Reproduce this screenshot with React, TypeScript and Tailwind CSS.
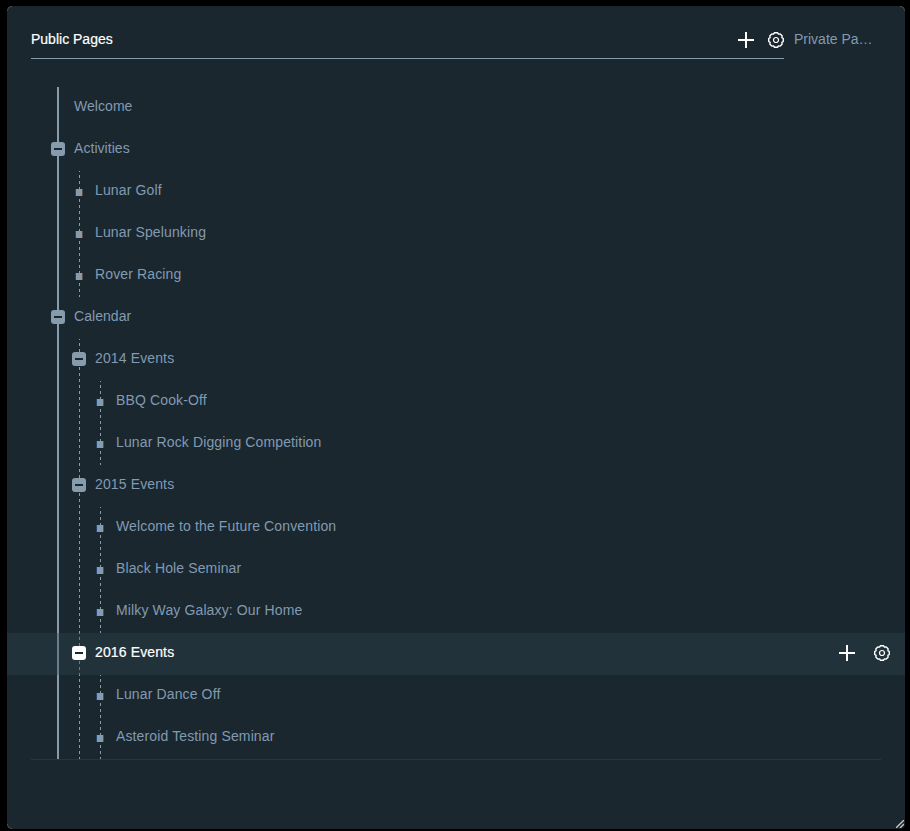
type Page = { title: string; children?: Page[]; active?: boolean };

const pages: Page[] = [
  { title: "Welcome" },
  {
    title: "Activities",
    children: [{ title: "Lunar Golf" }, { title: "Lunar Spelunking" }, { title: "Rover Racing" }],
  },
  {
    title: "Calendar",
    children: [
      { title: "2014 Events", children: [{ title: "BBQ Cook-Off" }, { title: "Lunar Rock Digging Competition" }] },
      {
        title: "2015 Events",
        children: [
          { title: "Welcome to the Future Convention" },
          { title: "Black Hole Seminar" },
          { title: "Milky Way Galaxy: Our Home" },
        ],
      },
      {
        title: "2016 Events",
        active: true,
        children: [{ title: "Lunar Dance Off" }, { title: "Asteroid Testing Seminar" }],
      },
    ],
  },
];

function Plus() {
  return (
    <svg width="16" height="16" viewBox="0 0 16 16" className="shrink-0" stroke="#fff" strokeWidth="2">
      <path d="M8 0v16M0 8h16" />
    </svg>
  );
}

function Gear() {
  return (
    <svg width="16" height="16" viewBox="-8 -8 16 16" className="shrink-0" fill="none" stroke="#fff" strokeWidth="1.4" strokeLinejoin="round">
      <path d="M-1.5-7.3H1.5L2.4-5.9L4.2-6.1L6.1-4.2L5.9-2.4L7.3-1.5V1.5L5.9 2.4L6.1 4.2L4.2 6.1L2.4 5.9L1.5 7.3H-1.5L-2.4 5.9L-4.2 6.1L-6.1 4.2L-5.9 2.4L-7.3 1.5V-1.5L-5.9-2.4L-6.1-4.2L-4.2-6.1L-2.4-5.9Z" />
      <circle r="2.5" strokeWidth="1.2" />
    </svg>
  );
}

function Guide({ level }: { level: number }) {
  if (level === 0) return <span className="absolute inset-y-0 left-[6px] w-[2px] bg-[#869cad]" />;
  return (
    <span className="absolute inset-y-0 left-[7px] w-px bg-[repeating-linear-gradient(to_bottom,#869cad_0_1px,transparent_1px_4px,#869cad_4px_6px)]" />
  );
}

function Marker({ page, level }: { page: Page; level: number }) {
  if (page.children) {
    return (
      <span
        className={`absolute left-0 top-[13px] flex size-[14px] items-center justify-center rounded-[3px] ${page.active ? "bg-white" : "bg-[#869cad]"}`}
      >
        <span className="h-[2px] w-[8px] bg-[#1a272e]" />
      </span>
    );
  }
  if (level === 0) return null;
  return (
    <span className="absolute left-[3px] top-[18px] h-[7px] w-[8px] border-l border-r border-l-[#1f4372] border-r-[#65483a] bg-[#869cad]" />
  );
}

function Row({ page, level }: { page: Page; level: number }) {
  return (
    <>
      <div className="relative flex h-[42px] items-center pl-11 pr-[15px]">
        {Array.from({ length: level + 1 }, (_, i) => (
          <span key={i} className="relative h-full w-[21px] shrink-0">
            <Guide level={i} />
            {i === level && !page.active && <Marker page={page} level={level} />}
          </span>
        ))}
        {page.active && <span className="absolute inset-0 bg-[#334852]/35" />}
        {page.active && (
          <span className="absolute left-[65px] top-0">
            <Marker page={page} level={level} />
          </span>
        )}
        <span
          className={`relative -top-[2px] grow pl-[2px] ${level === 0 ? "tracking-[0.05px]" : "tracking-[0.13px]"} ${page.active ? "text-white [-webkit-text-stroke:0.2px_#fff]" : ""}`}
        >
          {page.title}
        </span>
        {page.active && (
          <span className="relative -top-[1px] flex items-center gap-[19px]">
            <Plus />
            <Gear />
          </span>
        )}
      </div>
      {page.children?.map((child) => (
        <Row key={child.title} page={child} level={level + 1} />
      ))}
    </>
  );
}

export default function App() {
  return (
    <div className="h-[831px] w-[910px] bg-black pl-[7px] pt-[6px] font-['Liberation_Sans',Arial,sans-serif] text-[14px] leading-5 text-[#829ab2]">
      <main className="relative h-[823px] w-[898px] rounded-[5px] bg-[#1a272e] pt-6">
        <span className="absolute left-0 top-0 size-[5px] rounded-tl-[5px] border-l border-t border-[#46525a]" />
        <span className="absolute right-0 top-0 size-[5px] rounded-tr-[5px] border-r border-t border-[#46525a]" />
        <span className="absolute bottom-0 left-0 size-[5px] rounded-bl-[5px] border-b border-l border-[#46525a]" />
        <header className="mx-6 flex h-[29px] items-start">
          <div className="flex h-[29px] w-[753px] items-start justify-between border-b border-[#869cad]">
            <span className="-mt-px text-white [-webkit-text-stroke:0.2px_#fff]">Public Pages</span>
            <span className="mt-[2px] flex gap-[14px]">
              <Plus />
              <Gear />
            </span>
          </div>
          <span className="-mt-px ml-[10px]">Private Pa…</span>
        </header>
        <section className="mt-7">
          {pages.map((page) => (
            <Row key={page.title} page={page} level={0} />
          ))}
        </section>
        <div className="mx-6 h-px bg-[#27373f]" />
        <svg className="absolute bottom-[1px] right-[1px]" width="8" height="8" viewBox="0 0 8 8" stroke="#c8c8c8" strokeWidth="1.4">
          <path d="M0 8L8 0M4 8l4-4" />
        </svg>
      </main>
    </div>
  );
}
